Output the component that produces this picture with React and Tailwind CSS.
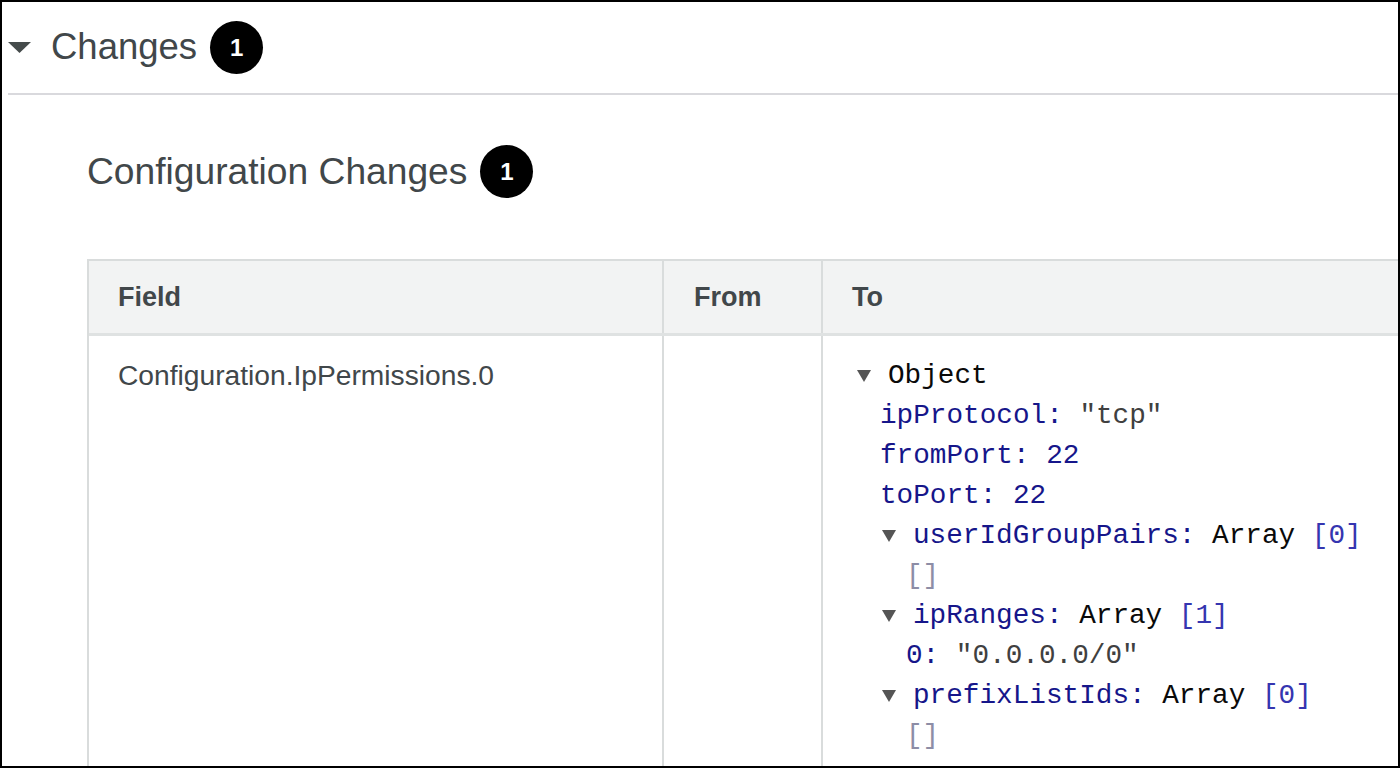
import React from 'react';

const KEY = 'text-[#16168a]';
const VAL = 'text-[#404040]';
const TYPE = 'text-[#0a0a0a]';
const COUNT = 'text-[#3535b0]';
const EMPTY = 'text-[#8d8da6]';

function Caret({ className = '' }) {
  return (
    <svg width="23" height="11" viewBox="0 0 23 11" className={className}>
      <path d="M0 0 H23 L11.5 11 Z" fill="#454b4b" />
    </svg>
  );
}

function TreeCaret() {
  return (
    <span className="inline-flex w-[33px] shrink-0 items-center">
      <svg width="14" height="12" viewBox="0 0 14 12" className="ml-[2px]">
        <path d="M0 0 H14 L7 12 Z" fill="#555555" />
      </svg>
    </span>
  );
}

function Badge({ n }) {
  return (
    <span className="ml-[13px] flex h-[53px] w-[53px] items-center justify-center rounded-full bg-black text-[24px] font-bold text-white">
      {n}
    </span>
  );
}

// one line of the object inspector
function Line({ indent = '', children }) {
  return <div className={`flex h-[40px] items-center whitespace-pre ${indent}`}>{children}</div>;
}

function ObjectTree() {
  return (
    <div className="pl-[32px] pt-[20px] font-['Liberation_Mono','Courier_New',monospace] text-[27.7px]">
      <Line>
        <TreeCaret />
        <span className={TYPE}>Object</span>
      </Line>
      <Line indent="ml-[25px]">
        <span className={KEY}>ipProtocol: </span>
        <span className={VAL}>"tcp"</span>
      </Line>
      <Line indent="ml-[25px]">
        <span className={KEY}>fromPort: 22</span>
      </Line>
      <Line indent="ml-[25px]">
        <span className={KEY}>toPort: 22</span>
      </Line>
      <Line indent="ml-[25px]">
        <TreeCaret />
        <span className={KEY}>userIdGroupPairs: </span>
        <span className={TYPE}>Array </span>
        <span className={COUNT}>[0]</span>
      </Line>
      <Line indent="ml-[51px]">
        <span className={EMPTY}>[]</span>
      </Line>
      <Line indent="ml-[25px]">
        <TreeCaret />
        <span className={KEY}>ipRanges: </span>
        <span className={TYPE}>Array </span>
        <span className={COUNT}>[1]</span>
      </Line>
      <Line indent="ml-[51px]">
        <span className={KEY}>0: </span>
        <span className={VAL}>"0.0.0.0/0"</span>
      </Line>
      <Line indent="ml-[25px]">
        <TreeCaret />
        <span className={KEY}>prefixListIds: </span>
        <span className={TYPE}>Array </span>
        <span className={COUNT}>[0]</span>
      </Line>
      <Line indent="ml-[51px]">
        <span className={EMPTY}>[]</span>
      </Line>
    </div>
  );
}

export default function App() {
  return (
    <div className="h-[768px] w-[1400px] overflow-hidden border-2 border-black bg-white font-['Liberation_Sans',Arial,sans-serif] text-[#41474a]">
      {/* Changes header */}
      <div className="ml-[6px] flex h-[93px] items-center border-b-2 border-[#d9d9dd]">
        <Caret />
        <span className="ml-[20px] text-[36.5px] leading-none">Changes</span>
        <Badge n="1" />
      </div>

      <div className="pl-[85px]">
        <div className="mt-[50px] flex items-center">
          <span className="text-[37.2px] leading-none">Configuration Changes</span>
          <Badge n="1" />
        </div>

        {/* Changes table */}
        <div className="mt-[61px] w-[1400px] border-l-2 border-t-2 border-[#d9dcdc]">
          <div className="flex h-[75px] border-b-[3px] border-[#dfe2e2] bg-[#f2f3f3] text-[27px] font-bold">
            <div className="flex w-[573px] items-center pl-[29px]">Field</div>
            <div className="flex w-[159px] items-center border-l-2 border-[#d9dcdc] pl-[30px]">From</div>
            <div className="flex flex-1 items-center border-l-2 border-[#d9dcdc] pl-[29px]">To</div>
          </div>
          <div className="flex h-[500px]">
            <div className="w-[573px] pl-[29px] pt-[19px] text-[28.2px] leading-[40px]">
              Configuration.IpPermissions.0
            </div>
            <div className="w-[159px] border-l-2 border-[#d9dcdc]" />
            <div className="flex-1 border-l-2 border-[#d9dcdc]">
              <ObjectTree />
            </div>
          </div>
        </div>
      </div>
    </div>
  );
}
